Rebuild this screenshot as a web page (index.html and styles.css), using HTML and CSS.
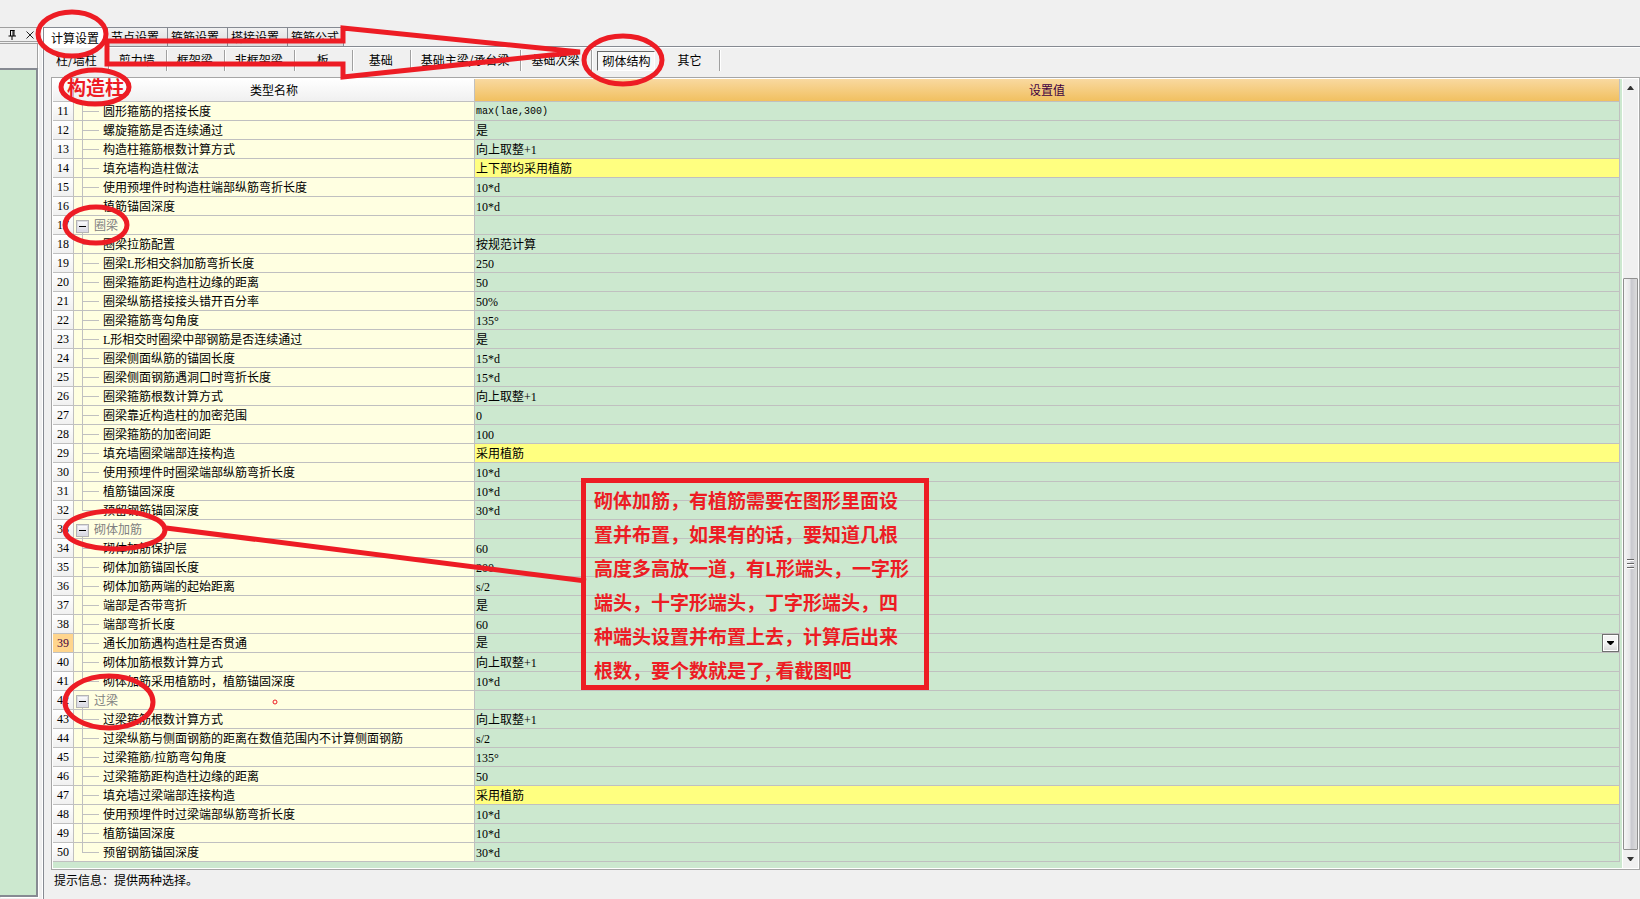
FILE: index.html
```
<!DOCTYPE html>
<html lang="zh-CN">
<head>
<meta charset="utf-8">
<title>计算设置</title>
<link rel="stylesheet" href="styles.css">
</head>
<body>
<div class="app">
  <aside class="dock">
    <div class="dock-title">
      <button class="icon-btn" aria-label="固定"><svg width="8" height="10" viewBox="0 0 8 10"><path d="M2 0.5H6.5M2.5 0V6M5 0V6M6 0V6M0.500 6H8M4 6V10" fill="none" stroke="#000"/></svg></button>
      <button class="icon-btn" aria-label="关闭"><svg width="8" height="8" viewBox="0 0 8 8"><path d="M0.500 0.500L7.500 7.500M7.500 0.500L0.500 7.500" fill="none" stroke="#222"/></svg></button>
    </div>
    <div class="dock-tools"></div>
    <div class="dock-body"></div>
  </aside>
  <main class="panel">
    <nav class="tabs">
      <button class="tab active">计算设置</button><button class="tab">节点设置</button><button class="tab">箍筋设置</button><button class="tab">搭接设置</button><button class="tab">箍筋公式</button>
    </nav>
    <nav class="subtabs">
      <button class="sub">柱/墙柱</button><button class="sub">剪力墙</button><button class="sub">框架梁</button><button class="sub">非框架梁</button><button class="sub">板</button><button class="sub">基础</button><button class="sub">基础主梁/承台梁</button><button class="sub">基础次梁</button><button class="sub pressed"><span>砌体结构</span></button><button class="sub">其它</button>
    </nav>
    <div class="frame">
      <div class="sheet">
        <table>
          <colgroup><col class="c-num"><col class="c-name"><col></colgroup>
          <thead><tr><th></th><th>类型名称</th><th class="hot">设置值</th></tr></thead>
          <tbody>
            <tr><th>11</th><td>圆形箍筋的搭接长度</td><td class="mono">max(lae,300)</td></tr>
            <tr><th>12</th><td>螺旋箍筋是否连续通过</td><td>是</td></tr>
            <tr><th>13</th><td>构造柱箍筋根数计算方式</td><td>向上取整+1</td></tr>
            <tr class="mark"><th>14</th><td>填充墙构造柱做法</td><td>上下部均采用植筋</td></tr>
            <tr><th>15</th><td>使用预埋件时构造柱端部纵筋弯折长度</td><td>10*d</td></tr>
            <tr class="last"><th>16</th><td>植筋锚固深度</td><td>10*d</td></tr>
            <tr class="group"><th>17</th><td><button class="fold" aria-label="折叠圈梁"></button>圈梁</td><td></td></tr>
            <tr><th>18</th><td>圈梁拉筋配置</td><td>按规范计算</td></tr>
            <tr><th>19</th><td>圈梁L形相交斜加筋弯折长度</td><td>250</td></tr>
            <tr><th>20</th><td>圈梁箍筋距构造柱边缘的距离</td><td>50</td></tr>
            <tr><th>21</th><td>圈梁纵筋搭接接头错开百分率</td><td>50%</td></tr>
            <tr><th>22</th><td>圈梁箍筋弯勾角度</td><td>135°</td></tr>
            <tr><th>23</th><td>L形相交时圈梁中部钢筋是否连续通过</td><td>是</td></tr>
            <tr><th>24</th><td>圈梁侧面纵筋的锚固长度</td><td>15*d</td></tr>
            <tr><th>25</th><td>圈梁侧面钢筋遇洞口时弯折长度</td><td>15*d</td></tr>
            <tr><th>26</th><td>圈梁箍筋根数计算方式</td><td>向上取整+1</td></tr>
            <tr><th>27</th><td>圈梁靠近构造柱的加密范围</td><td>0</td></tr>
            <tr><th>28</th><td>圈梁箍筋的加密间距</td><td>100</td></tr>
            <tr class="mark"><th>29</th><td>填充墙圈梁端部连接构造</td><td>采用植筋</td></tr>
            <tr><th>30</th><td>使用预埋件时圈梁端部纵筋弯折长度</td><td>10*d</td></tr>
            <tr><th>31</th><td>植筋锚固深度</td><td>10*d</td></tr>
            <tr class="last"><th>32</th><td>预留钢筋锚固深度</td><td>30*d</td></tr>
            <tr class="group"><th>33</th><td><button class="fold" aria-label="折叠砌体加筋"></button>砌体加筋</td><td></td></tr>
            <tr><th>34</th><td>砌体加筋保护层</td><td>60</td></tr>
            <tr><th>35</th><td>砌体加筋锚固长度</td><td>200</td></tr>
            <tr><th>36</th><td>砌体加筋两端的起始距离</td><td>s/2</td></tr>
            <tr><th>37</th><td>端部是否带弯折</td><td>是</td></tr>
            <tr><th>38</th><td>端部弯折长度</td><td>60</td></tr>
            <tr class="current"><th>39</th><td>通长加筋遇构造柱是否贯通</td><td><div class="pick">是<button class="drop" aria-label="选择"><svg width="7" height="4" viewBox="0 0 7 4"><path d="M0 0H7V1L4 4H3L0 1Z"/></svg></button></div></td></tr>
            <tr><th>40</th><td>砌体加筋根数计算方式</td><td>向上取整+1</td></tr>
            <tr class="last"><th>41</th><td>砌体加筋采用植筋时，植筋锚固深度</td><td>10*d</td></tr>
            <tr class="group"><th>42</th><td><button class="fold" aria-label="折叠过梁"></button>过梁</td><td></td></tr>
            <tr><th>43</th><td>过梁箍筋根数计算方式</td><td>向上取整+1</td></tr>
            <tr><th>44</th><td>过梁纵筋与侧面钢筋的距离在数值范围内不计算侧面钢筋</td><td>s/2</td></tr>
            <tr><th>45</th><td>过梁箍筋/拉筋弯勾角度</td><td>135°</td></tr>
            <tr><th>46</th><td>过梁箍筋距构造柱边缘的距离</td><td>50</td></tr>
            <tr class="mark"><th>47</th><td>填充墙过梁端部连接构造</td><td>采用植筋</td></tr>
            <tr><th>48</th><td>使用预埋件时过梁端部纵筋弯折长度</td><td>10*d</td></tr>
            <tr><th>49</th><td>植筋锚固深度</td><td>10*d</td></tr>
            <tr class="last"><th>50</th><td>预留钢筋锚固深度</td><td>30*d</td></tr>
          </tbody>
        </table>
      </div>
      <div class="scroll">
        <button class="arrow" aria-label="向上"><svg width="7" height="4" viewBox="0 0 7 4"><path d="M0 4L3 0H4L7 4Z" fill="#333"/></svg></button>
        <div class="track"><div class="thumb"><i></i><i></i><i></i></div></div>
        <button class="arrow" aria-label="向下"><svg width="7" height="4" viewBox="0 0 7 4"><path d="M0 0H7L4 4H3Z" fill="#333"/></svg></button>
      </div>
    </div>
    <footer class="hint">提示信息：提供两种选择。</footer>
  </main>
</div>
<svg class="ink" width="940" height="740" viewBox="0 0 940 740" aria-hidden="true">
  <ellipse cx="72" cy="34" rx="34" ry="22"/>
  <path d="M107 41H343V28L580 52L343 77V64H107Z"/>
  <ellipse cx="95" cy="87" rx="34" ry="17"/>
  <ellipse cx="623" cy="60" rx="39" ry="24"/>
  <ellipse cx="96" cy="225" rx="31" ry="18"/>
  <ellipse cx="115" cy="530" rx="50" ry="19"/>
  <path d="M166 528L586 581"/>
  <ellipse cx="109" cy="702" rx="44" ry="26"/>
  <circle class="dot" cx="275" cy="702" r="2"/>
</svg>
<div class="label">构造柱</div>
<div class="note">砌体加筋，有植筋需要在图形里面设<br>置并布置，如果有的话，要知道几根<br>高度多高放一道，有L形端头，一字形<br>端头，十字形端头，丁字形端头，四<br>种端头设置并布置上去，计算后出来<br>根数，要个数就是了, 看截图吧</div>
</body>
</html>
```
FILE: styles.css
```
* { box-sizing: border-box; }
body {
  margin: 0;
  background: #f0f0f0;
  color: #000;
  font: 12px/18px "Liberation Serif", "Noto Sans CJK SC", serif;
}
button { margin: 0; padding: 0; border: 0; background: none; font: inherit; color: inherit; }
svg { display: block; }

.app { display: flex; gap: 5px; height: 100vh; padding-top: 27px; }

.dock { display: flex; flex-direction: column; width: 38px; padding-bottom: 2px; }
.dock-title {
  display: flex; align-items: center; justify-content: flex-end; gap: 10px;
  height: 15px; padding-right: 4px;
  border: solid #a0a0a0; border-width: 1px 0;
}
.dock-tools {
  height: 25px; margin-top: 1px;
  border: solid #a0a0a0; border-width: 1px 1px 0 0; box-shadow: 1px 0 #fff;
}
.dock-body {
  flex: 1; background: #cce8cf;
  border: 2px solid #868a92; border-left: 0; box-shadow: 1px 1px #fff;
}

.panel {
  flex: 1; min-width: 0; display: flex; flex-direction: column;
  border-left: 1px solid #868a92; box-shadow: -1px 0 #fff;
}
.tabs { display: flex; height: 20px; border-bottom: 1px solid #868a92; box-shadow: 0 1px #fff; }
.tab {
  width: 60px; height: 19px; padding: 2px 0 0 3px; line-height: 16px; text-align: left;
  border: 1px solid #868a92; border-width: 1px 1px 0 0;
  background: linear-gradient(#f2f2f2, #dcdcdc);
}
.tab.active { width: 64px; height: 20px; padding-left: 7px; background: #fff; }
.tab:last-child { width: 56px; }

.subtabs {
  display: flex; padding: 3px 0 6px 2px;
  font-family: "Noto Sans CJK SC", sans-serif; line-height: 16px;
}
.sub {
  min-width: 58px; height: 21px; padding: 0 11px 2px 10px;
  border-right: 1px solid #a0a0a0; box-shadow: 1px 0 #fff;
  white-space: nowrap;
}
.sub.pressed { padding: 0 7px 0 5px; border-right: 0; box-shadow: none; }
.sub.pressed span {
  display: block; height: 20px; padding: 0 3px 0 5px; line-height: 18px; background: #f8f8f8;
  border: 1px solid #fff; border-top-color: #696969; border-left-color: #696969;
}

.frame {
  display: flex; flex: 1; min-height: 0; margin: 0 0 0 7px;
  border: 1px solid #a6a6a6; background: #fff; padding: 1px;
}
.sheet { flex: 1; min-width: 0; padding-right: 2px; background: #cce8cf; }
table { width: 100%; table-layout: fixed; border-collapse: separate; border-spacing: 0; }
.c-num { width: 21px; }
.c-name { width: 401px; }
tr { height: 19px; }
th, td {
  height: 19px; padding: 0; font-weight: normal; white-space: nowrap; overflow: hidden;
  border: solid #c0c0c0; border-width: 0 1px 1px 0;
}
thead th { height: 23px; padding-top: 2px; background: linear-gradient(#fff, #f0f0f0); }
thead .hot { color: #400040; background: linear-gradient(#f9d9a0, #f1c060); }
tbody th { background: linear-gradient(#fff, #f0f0f0); }
td { padding: 2px 0 0 1px; line-height: 16px; }
td:nth-child(2) {
  padding-left: 29px;
  background:
    linear-gradient(#c0c0c0, #c0c0c0) 8px 0 / 1px 100% no-repeat,
    linear-gradient(#c0c0c0, #c0c0c0) 8px 9px / 17px 1px no-repeat,
    #ffffe1;
}
.last td:nth-child(2) { background-size: 1px 10px, 17px 1px, auto; }
.group td:nth-child(2) {
  padding-left: 2px; color: #808080;
  background: linear-gradient(#c0c0c0, #c0c0c0) 8px 100% / 1px 4px no-repeat, #ffffe1;
}
.mark td:last-child { background: #ffff80; }
.current th { color: #400040; background: #ffd58d; }
.mono { font-family: "Liberation Mono", monospace; font-size: 10px; }
.fold {
  width: 13px; height: 13px; margin: -2px 5px 0 0; vertical-align: middle;
  border: 1px solid #b4b4b4; box-shadow: inset 0 0 0 1px #dcdce4;
  background: linear-gradient(#000, #000) center / 7px 1px no-repeat, linear-gradient(#fff, #d4d4e0);
}
.current td:last-child { padding-top: 0; }
.pick { display: flex; justify-content: space-between; line-height: 19px; height: 18px; }
.drop {
  display: grid; place-items: center; width: 17px; height: 18px;
  border: 1px solid #707070; background: linear-gradient(#f4f4f4 50%, #d8d8d8);
  box-shadow: inset 0 0 0 1px #fff;
}

.scroll { display: flex; flex-direction: column; width: 16px; background: #f0f0f0; border-left: 1px solid #fff; }
.arrow { display: grid; place-items: center; height: 18px; }
.track { flex: 1; display: flex; flex-direction: column; justify-content: flex-end; }
.thumb {
  display: flex; flex-direction: column; align-items: center; justify-content: center; gap: 2px;
  height: 76%; border: 1px solid #909090; border-radius: 1px;
  background: linear-gradient(90deg, #f6f6f6, #e6e6e8 45%, #c8c8ce 55%, #dcdcdc);
}
.thumb i { width: 7px; height: 2px; background: #666; border-bottom: 1px solid #fff; }

.hint { height: 29px; padding: 2px 0 0 10px; }

.ink { position: absolute; left: 0; top: 0; fill: none; stroke: #ed1c24; stroke-width: 5; pointer-events: none; }
.ink .dot { stroke-width: 1; }
.label, .note {
  position: absolute; color: #ed1c24;
  font: bold 19px/34px "Noto Sans CJK SC", sans-serif; white-space: nowrap;
}
.label { left: 67px; top: 70px; }
.note { left: 581px; top: 478px; width: 348px; height: 212px; padding-left: 8px; border: 5px solid #ed1c24; }
```
